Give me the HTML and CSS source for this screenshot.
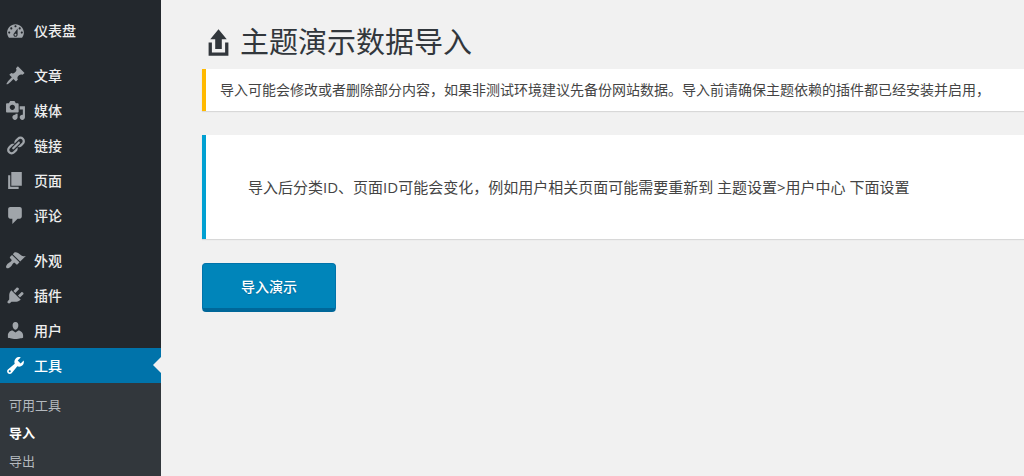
FILE: index.html
```html
<!DOCTYPE html>
<html lang="zh-CN">
<head>
<meta charset="UTF-8">
<meta name="viewport" content="width=device-width, initial-scale=1.0">
<title>主题演示数据导入</title>
<link rel="stylesheet" href="styles.css">
</head>
<body>
    <nav class="admin-menu">
        <ul class="menu">
            <li>
                <a class="menu-item" href="#">
                    <svg class="icon" viewBox="0 0 20 20"><path d="M3.76 17h12.48c1.1-1.37 1.76-3.11 1.76-5 0-4.42-3.58-8-8-8s-8 3.58-8 8c0 1.89.66 3.63 1.76 5zM10 5c.55 0 1 .45 1 1s-.45 1-1 1-1-.45-1-1 .45-1 1-1zM6 7c.55 0 1 .45 1 1s-.45 1-1 1-1-.45-1-1 .45-1 1-1zm8 0c.55 0 1 .45 1 1s-.45 1-1 1-1-.45-1-1 .45-1 1-1zm-5.37 5.55L12 8v6c0 1.1-.9 2-2 2s-2-.9-2-2c0-.57.24-1.08.63-1.45zM4 11c.55 0 1 .45 1 1s-.45 1-1 1-1-.45-1-1 .45-1 1-1zm12 0c.55 0 1 .45 1 1s-.45 1-1 1-1-.45-1-1 .45-1 1-1zm-5 3c0-.55-.45-1-1-1s-1 .45-1 1 .45 1 1 1 1-.45 1-1z"/></svg>
                    仪表盘
                </a>
            </li>
            <li class="separator"></li>
            <li>
                <a class="menu-item" href="#">
                    <svg class="icon" viewBox="0 0 20 20"><path d="M10.44 3.02l1.82-1.82 6.36 6.35-1.83 1.82c-1.05-.68-2.48-.57-3.41.36l-.75.75c-.92.93-1.04 2.35-.35 3.41l-1.83 1.82-2.41-2.41-2.8 2.79c-.42.42-3.38 2.71-3.8 2.29s1.86-3.39 2.28-3.81l2.79-2.79L4.1 9.36l1.83-1.82c1.05.69 2.48.57 3.4-.36l.75-.75c.93-.92 1.05-2.35.36-3.41z"/></svg>
                    文章
                </a>
            </li>
            <li>
                <a class="menu-item" href="#">
                    <svg class="icon" viewBox="0 0 20 20"><path d="M13 11V4c0-.55-.45-1-1-1h-1.67L9 1H5L3.67 3H2c-.55 0-1 .45-1 1v7c0 .55.45 1 1 1h10c.55 0 1-.45 1-1zM7 4.5c1.38 0 2.5 1.12 2.5 2.5S8.38 9.5 7 9.5 4.5 8.38 4.5 7 5.62 4.5 7 4.5zM14 6h5v10.5c0 1.38-1.12 2.5-2.5 2.5S14 17.88 14 16.5s1.12-2.5 2.5-2.5c.17 0 .34.02.5.05V9h-3V6zm-4 8.05V13h2v3.5c0 1.38-1.12 2.5-2.5 2.5S7 17.88 7 16.5 8.12 14 9.5 14c.17 0 .34.02.5.05z"/></svg>
                    媒体
                </a>
            </li>
            <li>
                <a class="menu-item" href="#">
                    <svg class="icon" viewBox="0 0 20 20"><path d="M17.74 2.76c1.68 1.69 1.68 4.41 0 6.1l-1.53 1.52c-1.12 1.12-2.7 1.47-4.14 1.09l2.62-2.61.76-.77.76-.76c.84-.84.84-2.2 0-3.04-.84-.85-2.2-.85-3.04 0l-.77.76-3.38 3.38c-.37-1.44-.02-3.02 1.1-4.14l1.52-1.53c1.69-1.68 4.42-1.68 6.1 0zM8.59 13.43l5.34-5.34c.42-.42.42-1.1 0-1.52-.44-.43-1.13-.39-1.53 0l-5.33 5.34c-.42.42-.42 1.1 0 1.52.44.43 1.13.39 1.52 0zm-.76 2.29l4.14-4.15c.38 1.44.03 3.02-1.09 4.14l-1.52 1.53c-1.69 1.68-4.41 1.68-6.1 0-1.68-1.68-1.68-4.42 0-6.1l1.53-1.52c1.12-1.12 2.7-1.47 4.14-1.1l-4.14 4.15c-.85.84-.85 2.2 0 3.05.84.84 2.2.84 3.04 0z"/></svg>
                    链接
                </a>
            </li>
            <li>
                <a class="menu-item" href="#">
                    <svg class="icon" viewBox="0 0 20 20"><path d="M6 15V2h10v13H6zm-1 1h8v2H3V5h2v11z"/></svg>
                    页面
                </a>
            </li>
            <li>
                <a class="menu-item" href="#">
                    <svg class="icon" viewBox="0 0 20 20"><path d="M5 2h9c1.1 0 2 .9 2 2v7c0 1.1-.9 2-2 2h-2l-5 5v-5H5c-1.1 0-2-.9-2-2V4c0-1.1.9-2 2-2z"/></svg>
                    评论
                </a>
            </li>
            <li class="separator"></li>
            <li>
                <a class="menu-item" href="#">
                    <svg class="icon" viewBox="0 0 20 20"><path d="M14.48 11.06L7.41 3.99l1.5-1.5c.5-.56 2.3-.47 3.51.32 1.21.8 1.43 1.28 2.91 2.1 1.18.64 2.45 1.26 4.45.85zm-.71.71L6.7 4.7 4.93 6.47c-.39.39-.39 1.02 0 1.41l1.06 1.06c.39.39.39 1.03 0 1.42-.6.6-1.43 1.11-2.21 1.69-.35.26-.7.53-1.01.84C1.43 14.23.4 16.08 1.4 17.07c.99 1 2.84-.03 4.18-1.36.31-.31.58-.66.85-1.02.57-.78 1.08-1.61 1.69-2.21.39-.39 1.02-.39 1.41 0l1.06 1.06c.39.39 1.02.39 1.41 0z"/></svg>
                    外观
                </a>
            </li>
            <li>
                <a class="menu-item" href="#">
                    <svg class="icon" viewBox="0 0 20 20"><path d="M13.11 4.36L9.87 7.6 8 5.73l3.24-3.24c.35-.34 1.05-.2 1.56.32.52.51.66 1.21.31 1.55zm-8 1.77l.91-1.12 9.01 9.01-1.19.84c-.71.71-2.63 1.16-3.82 1.16H6.14L4.9 17.26c-.59.59-1.54.59-2.12 0-.59-.58-.59-1.53 0-2.12l1.24-1.24v-3.88c0-1.13.4-3.19 1.09-3.89zm7.26 3.97l3.24-3.24c.34-.35 1.04-.21 1.55.31.52.51.66 1.21.31 1.55l-3.24 3.25z"/></svg>
                    插件
                </a>
            </li>
            <li>
                <a class="menu-item" href="#">
                    <svg class="icon" viewBox="0 0 20 20"><path d="M10 9.25c-2.27 0-2.73-3.44-2.73-3.44C7 4.02 7.82 2 9.97 2c2.16 0 2.98 2.02 2.71 3.81 0 0-.41 3.44-2.68 3.44zm0 2.57L12.72 10c2.39 0 4.52 2.33 4.52 4.53v2.49s-3.65 1.13-7.24 1.13c-3.65 0-7.24-1.13-7.24-1.13v-2.49c0-2.25 1.94-4.48 4.47-4.48z"/></svg>
                    用户
                </a>
            </li>
            <li>
                <a class="menu-item active" href="#">
                    <svg class="icon" viewBox="0 0 20 20"><path d="M16.68 9.77c-1.34 1.34-3.3 1.67-4.95.99l-5.41 6.52c-.99.99-2.59.99-3.58 0s-.99-2.59 0-3.57l6.52-5.42c-.68-1.65-.35-3.61.99-4.95 1.28-1.28 3.12-1.62 4.72-1.06l-2.89 2.89 2.82 2.82 2.86-2.87c.53 1.58.18 3.39-1.08 4.65zM3.81 16.21c.4.39 1.04.39 1.43 0 .4-.4.4-1.04 0-1.43-.39-.4-1.03-.4-1.43 0-.39.39-.39 1.03 0 1.43z"/></svg>
                    工具
                </a>
                <ul class="submenu">
                    <li><a href="#">可用工具</a></li>
                    <li><a class="current" href="#">导入</a></li>
                    <li><a href="#">导出</a></li>
                </ul>
            </li>
        </ul>
    </nav>
    <main class="content">
        <h1 class="page-title">
            <svg class="title-icon" viewBox="0 0 20 20"><path d="M8 14V8H5l5-6 5 6h-3v6H8zm-2 2v-6H4v8h12v-8h-2v6H6z"/></svg>
            主题演示数据导入
        </h1>
        <div class="notice warning">
            <p>导入可能会修改或者删除部分内容，如果非测试环境建议先备份网站数据。导入前请确保主题依赖的插件都已经安装并启用，</p>
        </div>
        <div class="notice info">
            <p>导入后分类ID、页面ID可能会变化，例如用户相关页面可能需要重新到 主题设置&gt;用户中心 下面设置</p>
        </div>
        <button class="import-button" type="button">导入演示</button>
    </main>
</body>
</html>
```
FILE: styles.css
```css
* {
    box-sizing: border-box;
}
body {
    margin: 0;
    min-height: 100vh;
    display: flex;
    background-color: #f1f1f1;
    color: #444;
    font-family: "Open Sans", "Noto Sans CJK SC", sans-serif;
    font-size: 14px;
}
ul {
    list-style: none;
    margin: 0;
    padding: 0;
}
p {
    margin: 0;
}
a {
    text-decoration: none;
}

/* Sidebar */
.admin-menu {
    flex: 0 0 161px;
    display: flex;
    flex-direction: column;
    padding-top: 13px;
    background-color: #23282d;
}
.menu {
    flex: 1;
    display: flex;
    flex-direction: column;
}
.menu > li:last-child {
    flex: 1;
    background-color: #32373c;
}
.separator {
    height: 10px;
}
.menu-item {
    position: relative;
    display: flex;
    align-items: center;
    gap: 8px;
    height: 35px;
    padding-left: 5px;
    color: #eee;
    font-weight: 500;
    line-height: 20px;
}
.icon {
    width: 21px;
    height: 21px;
    fill: #a0a5aa;
}
.menu-item.active {
    background-color: #0073aa;
    color: #fff;
}
.menu-item.active .icon {
    fill: #fff;
}
/* arrow that points from the content to the open item */
.menu-item.active:after {
    content: "";
    position: absolute;
    right: 0;
    top: 9px;
    border: 8px solid transparent;
    border-left-width: 0;
    border-right-color: #f1f1f1;
}
.submenu {
    padding-top: 8px;
}
.submenu a {
    display: block;
    padding-left: 9px;
    font-size: 13px;
    line-height: 28px;
    color: #b4b9be;
}
.submenu a.current {
    color: #fff;
    font-weight: bold;
}

/* Content */
.content {
    flex: 1;
    min-width: 0;
    padding: 24px 0 0 41px;
}
.page-title {
    display: flex;
    align-items: center;
    gap: 5px;
    margin: 0 0 9px;
    color: #32373c;
    font-size: 29px;
    font-weight: 400;
    line-height: 36px;
}
.title-icon {
    width: 33px;
    height: 33px;
    fill: #32373c;
}
.notice {
    margin-bottom: 24px;
    border-left: 4px solid;
    background-color: #fff;
    box-shadow: 0 1px 1px rgba(0, 0, 0, .1);
}
.notice.warning {
    padding: 11px 0 11px 14px;
    border-left-color: #ffb900;
    line-height: 20px;
}
.notice.info {
    padding: 42px;
    border-left-color: #00a0d2;
    font-size: 15px;
    line-height: 20px;
}
.import-button {
    height: 49px;
    padding: 0 38px;
    border: 1px solid #0073aa;
    border-bottom: 4px solid #006799;
    border-radius: 4px;
    background-color: #0085ba;
    color: #fff;
    font-family: inherit;
    font-size: 14px;
    font-weight: 500;
    text-shadow: 0 1px 1px #006799;
    cursor: pointer;
}
```
